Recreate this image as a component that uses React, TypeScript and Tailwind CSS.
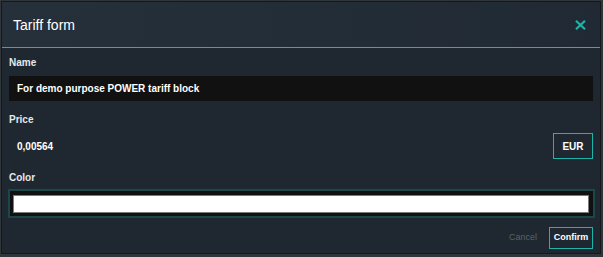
import React from "react";

const labelCls =
  "h-[12px] text-[10px] leading-[12px] font-bold text-[#e8e8e8]";

const TariffForm = () => {
  return (
    <div className="flex h-full w-full flex-col bg-[#1f2831]">
      {/* header */}
      <div className="flex h-[45px] items-center justify-between bg-gradient-to-r from-[#25303b] to-[#212a34] pl-[11px] pr-[14px]">
        <h2 className="text-[14px] leading-none text-white">Tariff form</h2>
        <button className="flex h-[12px] w-[12px] items-center justify-center text-[#1cb5a8]">
          <svg width="11" height="10" viewBox="0 0 11 10">
            <path
              d="M1 0.8 L10 9.2 M10 0.8 L1 9.2"
              stroke="currentColor"
              strokeWidth="2.2"
            />
          </svg>
        </button>
      </div>
      <div className="h-px bg-[#1fb3a9]" />

      <div className="flex flex-col pl-[7px] pr-[7px] pt-[9px]">
        <label className={labelCls}>Name</label>
        <div className="mt-[7px] flex h-[25px] items-center bg-[#111111] pl-[8px] text-[10px] font-bold text-white">
          For demo purpose POWER tariff block
        </div>

        <label className={`${labelCls} mt-[13px]`}>Price</label>
        <div className="mt-[7px] flex h-[26px] items-center justify-between">
          <span className="pl-[8px] text-[10px] font-bold text-white">
            0,00564
          </span>
          <button className="flex h-[26px] w-[40px] items-center justify-center border border-[#1fb3a9] text-[10px] font-bold text-white">
            EUR
          </button>
        </div>

        <label className={`${labelCls} mt-[13px]`}>Color</label>
        <div className="-ml-px mt-[5px] flex h-[29px] w-[587px] items-center border-2 border-[#1c4749] bg-[#111111] pl-[3px] pr-[4px]">
          <div className="h-[18px] w-full border border-[#7a7a7a] bg-white" />
        </div>

        <div className="mt-[9px] flex items-center justify-end gap-[12px]">
          <span className="text-[9px] text-[#5b6168]">Cancel</span>
          <button className="flex h-[22px] w-[44px] items-center justify-center border border-[#1fb3a9] text-[9px] font-bold text-white">
            Confirm
          </button>
        </div>
      </div>
    </div>
  );
};

export default function App() {
  return (
    <div
      className="h-[257px] w-[603px] overflow-hidden bg-[#30353a] pl-px pt-px"
      style={{ fontFamily: '"Liberation Sans", Arial, sans-serif' }}
    >
      <div className="h-[253px] w-[600px] overflow-hidden border border-[#15191c]">
        <TariffForm />
      </div>
    </div>
  );
}
